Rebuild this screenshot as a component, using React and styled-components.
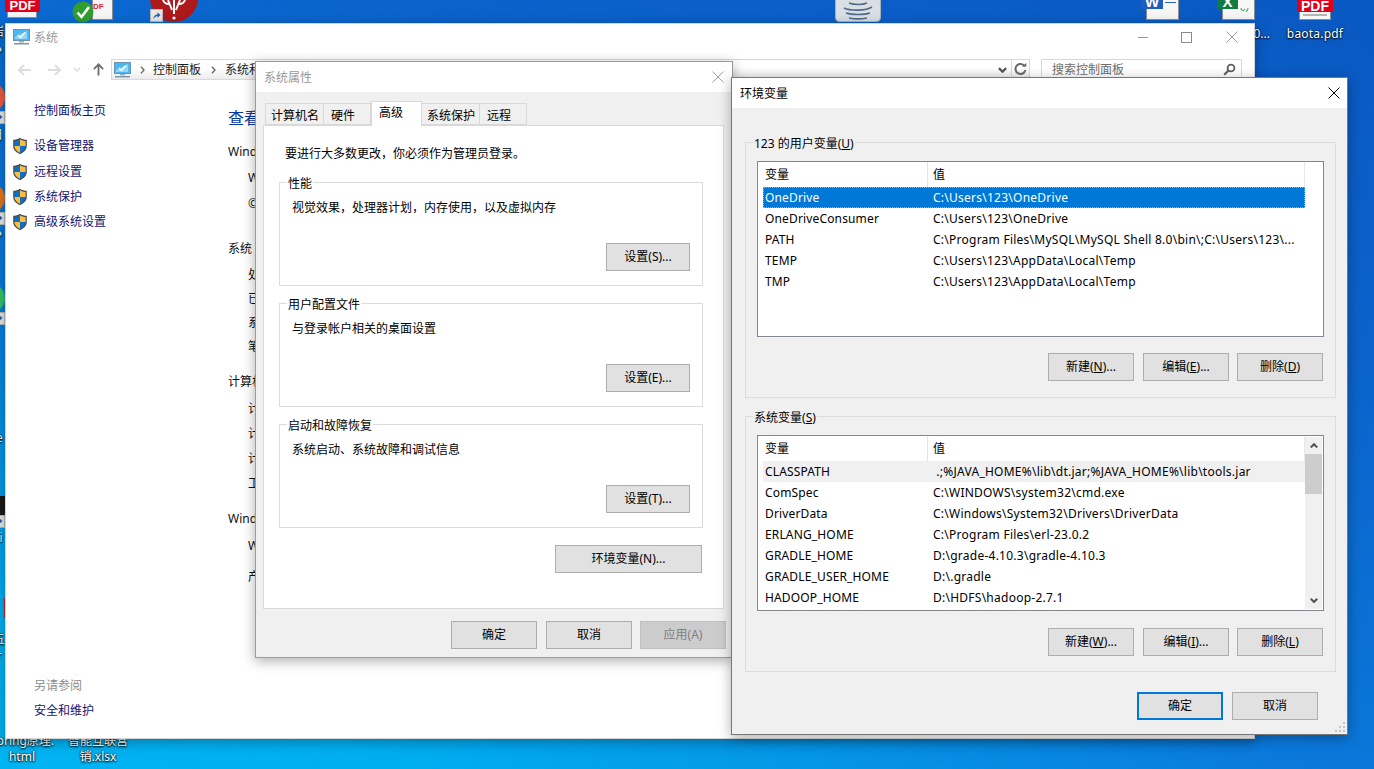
import React from 'react';
import styled, { createGlobalStyle } from 'styled-components';

const Global = createGlobalStyle`
  html, body { margin: 0; padding: 0; width: 1374px; height: 769px; overflow: hidden; }
  * { box-sizing: border-box; }
  body { font: 12px/16px "Noto Sans", "Noto Sans CJK SC", sans-serif; color: #000; }
  u { text-underline-offset: 1px; }
`;

const Desktop = styled.div`
  position: relative;
  width: 1374px;
  height: 769px;
  overflow: hidden;
  background: linear-gradient(200deg, #0a58c2 0%, #0b63cc 30%, #0a78da 62%, #00aef0 88%, #00b4f2 100%);
`;

/* ---------- desktop items ---------- */
const Item = styled.div`
  position: absolute;
  left: ${p => p.$x}px;
  top: ${p => p.$y}px;
  width: ${p => p.$w}px;
  height: ${p => p.$h}px;
  background: ${p => p.$bg || 'transparent'};
`;
const EdgeDisc = styled(Item)`
  border-radius: 50%;
`;
const DocSheet = styled(Item)`
  background: #f6f6f6;
  border: 1px solid #8d8d8d;
  border-top: none;
`;
const BrandBlock = styled(Item)`
  background: ${p => p.$bg};
  color: #fff;
  font: 700 ${p => p.$size || 13}px/${p => p.$lh || p.$h}px "Liberation Sans", sans-serif;
  text-align: center;
  overflow: hidden;
`;
const DocMark = styled(Item)`
  color: #d8262c;
  font: 700 8px/8px "Liberation Sans", sans-serif;
  white-space: nowrap;
`;
const DeskLabel = styled.div`
  position: absolute;
  left: ${p => p.$x}px;
  top: ${p => p.$y}px;
  width: ${p => p.$w}px;
  color: #fff;
  text-align: ${p => p.$align || 'center'};
  white-space: nowrap;
  font-size: 12px;
  line-height: 16px;
  letter-spacing: ${p => p.$track || 0}px;
  text-shadow: 0 1px 2px #000, 0 0 2px #000;
`;
const Shortcut = styled.div`
  position: absolute;
  left: ${p => p.$x}px;
  top: ${p => p.$y}px;
  width: 13px;
  height: 13px;
  background: #e8e8e8;
  border: 1px solid #b9b9b9;
  display: flex;
  align-items: center;
  justify-content: center;
`;

/* ---------- windows ---------- */
const Window = styled.div`
  position: absolute;
  left: ${p => p.$x}px;
  top: ${p => p.$y}px;
  width: ${p => p.$w}px;
  height: ${p => p.$h}px;
  z-index: ${p => p.$z};
  display: flex;
  flex-direction: column;
  background: ${p => p.$bg};
  border: 1px solid ${p => p.$line};
  box-shadow: 0 3px 12px rgba(0, 0, 0, 0.32);
`;
const TitleBar = styled.div`
  flex: none;
  height: ${p => p.$h}px;
  display: flex;
  align-items: center;
  background: #fff;
  padding: ${p => p.$pad};
  color: ${p => p.$color || '#000'};
`;
const TitleText = styled.span`
  margin-left: ${p => p.$gap || 0}px;
  flex: 1;
  padding-top: 2px;
`;
const CaptionBtn = styled.div`
  width: ${p => p.$w}px;
  height: 20px;
  display: flex;
  align-items: center;
  justify-content: center;
`;
const MinBar = styled.span`
  display: block;
  width: 10px;
  height: 1px;
  background: #9a9a9a;
`;

/* ---------- main system window ---------- */
const Toolbar = styled.div`
  flex: none;
  height: 36px;
  padding: 9px 12px 6px 11px;
  display: flex;
  align-items: flex-start;
`;
const NavBtn = styled.div`
  width: ${p => p.$w}px;
  height: 21px;
  margin-left: ${p => p.$left || 0}px;
  display: flex;
  align-items: center;
  justify-content: center;
`;
const AddressBar = styled.div`
  width: 919px;
  height: 21px;
  margin-left: 6px;
  display: flex;
  align-items: center;
  border: 1px solid #d9d9d9;
  background: linear-gradient(#ffffff 40%, #ececec);
  padding-left: 2px;
`;
const Crumb = styled.span`
  margin-left: ${p => p.$l || 0}px;
  margin-right: ${p => p.$r || 0}px;
  white-space: nowrap;
  color: #1a1a1a;
`;
const Spacer = styled.div`
  flex: 1;
`;
const AddrTool = styled.div`
  width: ${p => p.$w}px;
  height: 19px;
  display: flex;
  align-items: center;
  justify-content: center;
  border-left: ${p => (p.$sep ? '1px solid #d9d9d9' : 'none')};
`;
const SearchBox = styled.div`
  width: 201px;
  height: 21px;
  margin-left: 11px;
  display: flex;
  align-items: center;
  justify-content: space-between;
  padding: 0 5px 0 10px;
  border: 1px solid #d9d9d9;
  color: #6d6d6d;
`;
const MainBody = styled.div`
  flex: 1;
  display: flex;
  min-height: 0;
`;
const Sidebar = styled.div`
  width: 222px;
  flex: none;
  display: flex;
  flex-direction: column;
  padding: 17px 0 19px 6px;
`;
const SideLink = styled.div`
  height: 16px;
  display: flex;
  align-items: center;
  gap: 6px;
  color: #14146e;
  padding-left: ${p => (p.$plain ? 22 : 0)}px;
  margin-top: ${p => p.$top || 0}px;
  white-space: nowrap;
`;
const SideHint = styled.div`
  margin-top: auto;
  padding-left: 22px;
  color: #8c8c8c;
  margin-bottom: 9px;
`;
const Content = styled.div`
  flex: 1;
  padding-top: 21px;
`;
const Heading = styled.div`
  color: #0a3a9e;
  font-size: 16px;
  line-height: 22px;
  white-space: nowrap;
`;
const InfoLine = styled.div`
  margin-top: ${p => p.$top}px;
  padding-left: ${p => (p.$sub ? 20 : 0)}px;
  white-space: nowrap;
  color: #101010;
`;

/* ---------- properties dialog ---------- */
const TabStrip = styled.div`
  flex: none;
  height: 24px;
  margin-top: 9px;
  padding-left: 9px;
  display: flex;
  align-items: flex-end;
  position: relative;
  z-index: 1;
`;
const Tab = styled.div`
  width: ${p => p.$w}px;
  height: ${p => (p.$active ? 25 : 22)}px;
  margin-bottom: ${p => (p.$active ? -1 : 0)}px;
  background: ${p => (p.$active ? '#fff' : '#f0f0f0')};
  border: 1px solid #d9d9d9;
  border-left-width: ${p => (p.$first || p.$active ? 1 : 0)}px;
  border-bottom-width: ${p => (p.$active ? 0 : 1)}px;
  padding: ${p => (p.$active ? 3 : 4)}px 0 0 ${p => p.$text}px;
  white-space: nowrap;
`;
const Panel = styled.div`
  flex: none;
  width: 461px;
  height: 484px;
  margin-left: 7px;
  background: #fff;
  border: 1px solid #d9d9d9;
  padding: 20px 20px 0 15px;
`;
const Notice = styled.div`
  padding-left: 6px;
  height: 16px;
`;
const Group = styled.div`
  position: relative;
  width: ${p => p.$w}px;
  height: ${p => p.$h}px;
  margin-top: ${p => p.$top}px;
  border: 1px solid #dcdcdc;
  display: flex;
  flex-direction: column;
  padding: ${p => p.$pad};
`;
const Legend = styled.div`
  position: absolute;
  left: ${p => p.$x}px;
  top: -7px;
  padding: 0 1px;
  height: 16px;
  background: ${p => p.$bg};
  white-space: nowrap;
`;
const GroupText = styled.div`
  height: 16px;
`;
const Row = styled.div`
  display: flex;
  justify-content: flex-end;
  gap: ${p => p.$gap ?? 9}px;
  margin-top: ${p => p.$top || 0}px;
  padding-right: ${p => p.$right || 0}px;
`;
const Btn = styled.div`
  width: ${p => p.$w || 86}px;
  height: 28px;
  flex: none;
  margin-left: ${p => (p.$pull ? -1 : 0)}px;
  display: flex;
  align-items: center;
  justify-content: center;
  white-space: nowrap;
  background: ${p => (p.$off ? '#cccccc' : '#e1e1e1')};
  color: ${p => (p.$off ? '#7f7f7f' : '#000')};
  border: ${p => (p.$primary ? '2px solid #0078d7' : `1px solid ${p.$off ? '#bfbfbf' : '#adadad'}`)};
`;

/* ---------- env dialog ---------- */
const EnvBody = styled.div`
  flex: 1;
  background: #f0f0f0;
  padding: 34px 12px 0 13px;
  position: relative;
`;
const ListBox = styled.div`
  width: 567px;
  height: 176px;
  background: #fff;
  border: 1px solid #828790;
  display: flex;
`;
const ListMain = styled.div`
  flex: 1;
  min-width: 0;
  padding-left: 5px;
`;
const ListHead = styled.div`
  height: 25px;
  width: 542px;
  display: grid;
  grid-template-columns: 164px 1fr;
  border-right: 1px solid #e8e8e8;
`;
const HeadCell = styled.div`
  padding: 5px 0 0 ${p => (p.$val ? 5 : 2)}px;
  border-left: ${p => (p.$val ? '1px solid #e5e5e5' : 'none')};
  height: 25px;
`;
const ListRow = styled.div`
  height: 21px;
  width: 542px;
  display: grid;
  grid-template-columns: 164px 1fr;
  align-items: center;
  line-height: 21px;
  white-space: pre;
  background: ${p => (p.$sel ? '#0078d7' : p.$dim ? '#f0f0f0' : 'transparent')};
  color: ${p => (p.$sel ? '#fff' : '#000')};
  outline: ${p => (p.$sel ? '1px dotted #e8a050' : 'none')};
  outline-offset: -1px;
`;
const Cell = styled.div`
  padding-left: ${p => (p.$val ? 6 : 2)}px;
  overflow: hidden;
  letter-spacing: ${p => (p.$val ? 0.25 : 0.15)}px;
`;
const ScrollBar = styled.div`
  width: 17px;
  flex: none;
  margin: 1px 1px 1px 0;
  background: #f0f0f0;
  display: flex;
  flex-direction: column;
  align-items: stretch;
`;
const ScrollArrow = styled.div`
  flex: none;
  height: 17px;
  display: flex;
  align-items: center;
  justify-content: center;
`;
const ScrollThumb = styled.div`
  flex: none;
  height: 40px;
  background: #cdcdcd;
`;
const Grip = styled.svg`
  position: absolute;
  right: 1px;
  bottom: 1px;
`;

/* ---------- drawings ---------- */
const Monitor = () => (
  <svg width="17" height="16" viewBox="0 0 17 16">
    <rect x="0.5" y="0.5" width="16" height="11" fill="#4cb7f1" stroke="#6f93b3" />
    <path d="M2 8 L14 2 V10 H2Z" fill="#8ed6fa" />
    <path d="M5 6 l2.5 2.5 L12 3.5" fill="none" stroke="#fff" strokeWidth="1.4" />
    <rect x="6" y="12" width="5" height="1.5" fill="#9fb2c2" />
    <rect x="1" y="14" width="15" height="1.5" fill="#7f95a8" />
  </svg>
);
const Shield = () => (
  <svg width="16" height="18" viewBox="0 0 16 18">
    <path d="M8 .8C6 2.2 3.5 2.8 1.2 2.8V9c0 3.8 3.4 6.8 6.8 8.2 3.4-1.4 6.8-4.4 6.8-8.2V2.8C12.5 2.8 10 2.2 8 .8Z" fill="#4b4b4b" />
    <path d="M8 2.2C6.2 3.3 4.2 3.9 2.4 4V9H8Z" fill="#0e6fc6" />
    <path d="M8 2.2C9.8 3.3 11.8 3.9 13.6 4V9H8Z" fill="#fbbd3d" />
    <path d="M2.4 9C2.6 12.2 5.2 14.7 8 15.9V9Z" fill="#fbbd3d" />
    <path d="M13.6 9C13.4 12.2 10.8 14.7 8 15.9V9Z" fill="#0e6fc6" />
  </svg>
);
const XMark = ({ c, s = 12 }) => (
  <svg width={s} height={s} viewBox="0 0 12 12">
    <path d="M.5.5l11 11M11.5.5l-11 11" stroke={c} strokeWidth="1" fill="none" />
  </svg>
);
const ArrowRight = ({ c }) => (
  <svg width="15" height="14" viewBox="0 0 15 14">
    <path d="M1 7h12M8 2l5 5-5 5" fill="none" stroke={c} strokeWidth="2" />
  </svg>
);
const ArrowLeft = ({ c }) => (
  <svg width="15" height="14" viewBox="0 0 15 14">
    <path d="M14 7H2M7 2L2 7l5 5" fill="none" stroke={c} strokeWidth="2" />
  </svg>
);
const UpArrow = () => (
  <svg width="14" height="15" viewBox="0 0 14 15">
    <path d="M7 14V2M2 7l5-5 5 5" fill="none" stroke="#6d6d6d" strokeWidth="2" />
  </svg>
);
const Chev = ({ c = '#666', w = 8, h = 5, sw = 1.6, up }) => (
  <svg width={w} height={h} viewBox="0 0 8 5">
    <path d={up ? 'M.8 4.4L4 1.2l3.2 3.2' : 'M.8.8L4 4l3.2-3.2'} fill="none" stroke={c} strokeWidth={sw} />
  </svg>
);
const Sep = () => (
  <svg width="5" height="8" viewBox="0 0 5 8">
    <path d="M1 .8L4 4 1 7.2" fill="none" stroke="#666" strokeWidth="1.3" />
  </svg>
);
const Refresh = () => (
  <svg width="13" height="13" viewBox="0 0 13 13">
    <path d="M10.8 3.4A5 5 0 1 0 11.4 7" fill="none" stroke="#6b6b6b" strokeWidth="2" />
    <path d="M7.8 3.6h4.6V0Z" fill="#6b6b6b" />
  </svg>
);
const Magnifier = () => (
  <svg width="13" height="13" viewBox="0 0 13 13">
    <circle cx="8" cy="5" r="3.4" fill="none" stroke="#5f5f5f" strokeWidth="1.8" />
    <path d="M5.5 7.5L1.2 11.8" stroke="#5f5f5f" strokeWidth="2.2" />
  </svg>
);
const ShortArrow = () => (
  <svg width="9" height="9" viewBox="0 0 9 9">
    <path d="M1.5 8C1.5 5 3 3.5 5.5 3.5V1.2L8.5 4 5.5 6.8V5C4 5 2.8 6 1.5 8Z" fill="#2a5fa8" />
  </svg>
);

const AccLabel = ({ pre, k, post }) => (
  <span>{pre}(<u>{k}</u>){post}</span>
);

const userVars = [
  ['OneDrive', 'C:\\Users\\123\\OneDrive'],
  ['OneDriveConsumer', 'C:\\Users\\123\\OneDrive'],
  ['PATH', 'C:\\Program Files\\MySQL\\MySQL Shell 8.0\\bin\\;C:\\Users\\123\\...'],
  ['TEMP', 'C:\\Users\\123\\AppData\\Local\\Temp'],
  ['TMP', 'C:\\Users\\123\\AppData\\Local\\Temp'],
];
const sysVars = [
  ['CLASSPATH', ' .;%JAVA_HOME%\\lib\\dt.jar;%JAVA_HOME%\\lib\\tools.jar'],
  ['ComSpec', 'C:\\WINDOWS\\system32\\cmd.exe'],
  ['DriverData', 'C:\\Windows\\System32\\Drivers\\DriverData'],
  ['ERLANG_HOME', 'C:\\Program Files\\erl-23.0.2'],
  ['GRADLE_HOME', 'D:\\grade-4.10.3\\gradle-4.10.3'],
  ['GRADLE_USER_HOME', 'D:\\.gradle'],
  ['HADOOP_HOME', 'D:\\HDFS\\hadoop-2.7.1'],
];

const perfGroups = [
  { title: '性能', text: '视觉效果，处理器计划，内存使用，以及虚拟内存', key: 'S', top: 20 },
  { title: '用户配置文件', text: '与登录帐户相关的桌面设置', key: 'E', top: 17 },
  { title: '启动和故障恢复', text: '系统启动、系统故障和调试信息', key: 'T', top: 17 },
];

const ListHeader = () => (
  <ListHead>
    <HeadCell>变量</HeadCell>
    <HeadCell $val>值</HeadCell>
  </ListHead>
);

export default function App() {
  return (
    <Desktop>
      <Global />

      {/* desktop icons behind the windows */}
      <DocSheet $x={7} $y={0} $w={30} $h={18} />
      <BrandBlock $x={5} $y={0} $w={35} $h={12} $bg="#e0001b">PDF</BrandBlock>

      <DocSheet $x={92} $y={0} $w={21} $h={20} />
      <DocMark $x={93} $y={3} $w={12} $h={8}>DF</DocMark>
      <Item $x={72} $y={1} $w={24} $h={24}>
        <svg width="24" height="24" viewBox="0 0 24 24">
          <circle cx="11" cy="11" r="10.5" fill="#2f9e2f" />
          <path d="M5.5 11.5l4 4.5L17 6" fill="none" stroke="#fff" strokeWidth="2.6" />
        </svg>
      </Item>

      <Item $x={150} $y={-26} $w={48} $h={48}>
        <svg width="48" height="48" viewBox="0 0 48 48">
          <circle cx="24" cy="24" r="24" fill="#ad1a1c" />
          <path d="M24 26v14M18 26l4 10M30 26l-4 10M13 26c1 3 3 4 6 4M35 26c-1 3-3 4-6 4" stroke="#fff" strokeWidth="2" fill="none" />
          <circle cx="24" cy="44" r="1.6" fill="#fff" />
        </svg>
      </Item>
      <Shortcut $x={150} $y={9}><ShortArrow /></Shortcut>

      <Item $x={835} $y={-6} $w={46} $h={28}>
        <svg width="46" height="28" viewBox="0 0 46 28">
          <rect x=".5" y=".5" width="45" height="27" rx="4" fill="#d9dfe4" stroke="#a9b3bb" />
          <path d="M9 14c6 3 22 3 28-1M11 19c6 2 18 2 24 0M14 24c5 1 13 1 18 0M14 9c5 2 14 2 18 0" fill="none" stroke="#4e6b8a" strokeWidth="1.6" />
        </svg>
      </Item>

      <DocSheet $x={1146} $y={0} $w={33} $h={20} />
      <BrandBlock $x={1141} $y={0} $w={22} $h={9} $lh={3} $size={15} $bg="#1f5cbf">W</BrandBlock>
      <Item $x={1165} $y={2} $w={11} $h={1} $bg="#2a62c0" />

      <DocSheet $x={1222} $y={0} $w={33} $h={20} />
      <BrandBlock $x={1217} $y={0} $w={21} $h={9} $lh={3} $size={15} $bg="#107c41">X</BrandBlock>
      <Item $x={1240} $y={0} $w={10} $h={4}>
        <svg width="10" height="4" viewBox="0 0 10 4">
          <path d="M1 0c0 3 3 3 4 1M8 0c0 2-1 3-2 4" fill="none" stroke="#4fb37a" strokeWidth="1.2" />
        </svg>
      </Item>

      <DocSheet $x={1299} $y={0} $w={32} $h={20} />
      <Item $x={1303} $y={14} $w={24} $h={2} $bg="#b5b5b5" />
      <BrandBlock $x={1297} $y={0} $w={36} $h={12} $size={14} $bg="#e0001b">PDF</BrandBlock>

      <DeskLabel $x={1236} $y={26} $w={34} $align="right">0...</DeskLabel>
      <DeskLabel $x={1282} $y={26} $w={66} $track={0.2}>baota.pdf</DeskLabel>

      <DeskLabel $x={-21} $y={733} $w={86}>Spring原理.</DeskLabel>
      <DeskLabel $x={0} $y={749} $w={44}>html</DeskLabel>
      <DeskLabel $x={60} $y={733} $w={76}>智能互联营</DeskLabel>
      <DeskLabel $x={60} $y={749} $w={76}>销.xlsx</DeskLabel>

      {/* icons peeking out at the left edge */}
      <DeskLabel $x={-9} $y={24} $w={14}>岩</DeskLabel>
      <DeskLabel $x={-8} $y={44} $w={13}>P</DeskLabel>
      <EdgeDisc $x={-25} $y={82} $w={30} $h={30} $bg="#ee5a3c" />
      <Shortcut $x={-8} $y={111}><ShortArrow /></Shortcut>
      <EdgeDisc $x={-25} $y={183} $w={30} $h={30} $bg="#e0751f" />
      <Shortcut $x={-8} $y={212}><ShortArrow /></Shortcut>
      <EdgeDisc $x={-25} $y={283} $w={30} $h={30} $bg="#35c06a" />
      <Shortcut $x={-8} $y={312}><ShortArrow /></Shortcut>
      <Item $x={0} $y={496} $w={5} $h={19} $bg="#1a1a1a" />
      <Shortcut $x={-8} $y={515}><ShortArrow /></Shortcut>
      <Item $x={4} $y={598} $w={1} $h={20} $bg="#c0202a" />
      <DeskLabel $x={-11} $y={127} $w={16}>日</DeskLabel>
      <DeskLabel $x={-8} $y={228} $w={13}>P</DeskLabel>
      <DeskLabel $x={-6} $y={430} $w={11}>e</DeskLabel>
      <DeskLabel $x={-8} $y={530} $w={13}>ri</DeskLabel>
      <DeskLabel $x={-7} $y={632} $w={12}>五</DeskLabel>
      <DeskLabel $x={-7} $y={648} $w={12}>r</DeskLabel>

      {/* 系统 */}
      <Window $x={5} $y={23} $w={1250} $h={716} $z={1} $bg="#fff" $line="#d4d4d4">
        <TitleBar $h={26} $pad="0 0 0 7px" $color="#999">
          <Monitor />
          <TitleText $gap={4}>系统</TitleText>
          <CaptionBtn $w={38}><MinBar /></CaptionBtn>
          <CaptionBtn $w={48}>
            <svg width="11" height="11" viewBox="0 0 11 11"><rect x=".5" y=".5" width="10" height="10" fill="none" stroke="#8a8a8a" /></svg>
          </CaptionBtn>
          <CaptionBtn $w={44}><XMark c="#9a9a9a" /></CaptionBtn>
        </TitleBar>
        <Toolbar>
          <NavBtn $w={15}><ArrowLeft c="#dedede" /></NavBtn>
          <NavBtn $w={15} $left={15}><ArrowRight c="#dedede" /></NavBtn>
          <NavBtn $w={30}><Chev c="#dedede" /></NavBtn>
          <NavBtn $w={13}><UpArrow /></NavBtn>
          <AddressBar>
            <Monitor />
            <Crumb $l={9} $r={8}><Sep /></Crumb>
            <Crumb>控制面板</Crumb>
            <Crumb $l={10} $r={9}><Sep /></Crumb>
            <Crumb>系统和安全</Crumb>
            <Spacer />
            <AddrTool $w={17}><Chev c="#555" w={9} h={6} sw={2} /></AddrTool>
            <AddrTool $w={18} $sep><Refresh /></AddrTool>
          </AddressBar>
          <SearchBox>
            <span>搜索控制面板</span>
            <Magnifier />
          </SearchBox>
        </Toolbar>
        <MainBody>
          <Sidebar>
            <SideLink $plain>控制面板主页</SideLink>
            <SideLink $top={19}><Shield />设备管理器</SideLink>
            <SideLink $top={10}><Shield />远程设置</SideLink>
            <SideLink $top={9}><Shield />系统保护</SideLink>
            <SideLink $top={9}><Shield />高级系统设置</SideLink>
            <SideHint>另请参阅</SideHint>
            <SideLink $plain>安全和维护</SideLink>
          </Sidebar>
          <Content>
            <Heading>查看有关计算机的基本信息</Heading>
            <InfoLine $top={15}>Windows 版本</InfoLine>
            <InfoLine $sub $top={10}>Windows 10</InfoLine>
            <InfoLine $sub $top={10}>© 2019</InfoLine>
            <InfoLine $top={29}>系统</InfoLine>
            <InfoLine $sub $top={10}>处理器</InfoLine>
            <InfoLine $sub $top={8}>已安装</InfoLine>
            <InfoLine $sub $top={8}>系统类型</InfoLine>
            <InfoLine $sub $top={8}>笔和触控</InfoLine>
            <InfoLine $top={19}>计算机名</InfoLine>
            <InfoLine $sub $top={11}>计算机名</InfoLine>
            <InfoLine $sub $top={9}>计算机全名</InfoLine>
            <InfoLine $sub $top={9}>计算机描述</InfoLine>
            <InfoLine $sub $top={9}>工作组</InfoLine>
            <InfoLine $top={19}>Windows 激活</InfoLine>
            <InfoLine $sub $top={11}>Windows 已激活</InfoLine>
            <InfoLine $sub $top={15}>产品 ID</InfoLine>
          </Content>
        </MainBody>
      </Window>

      {/* 系统属性 */}
      <Window $x={255} $y={61} $w={478} $h={597} $z={2} $bg="#f0f0f0" $line="#9c9c9c">
        <TitleBar $h={30} $pad="0 8px 0 8px" $color="#999">
          <TitleText>系统属性</TitleText>
          <XMark c="#a0a0a0" />
        </TitleBar>
        <TabStrip>
          <Tab $w={59} $first $text={5}>计算机名</Tab>
          <Tab $w={47} $text={7}>硬件</Tab>
          <Tab $w={51} $active $text={7}>高级</Tab>
          <Tab $w={58} $text={5}>系统保护</Tab>
          <Tab $w={47} $text={7}>远程</Tab>
        </TabStrip>
        <Panel>
          <Notice>要进行大多数更改，你必须作为管理员登录。</Notice>
          {perfGroups.map(g => (
            <Group key={g.key} $w={424} $h={104} $top={g.top} $pad="17px 12px 0 12px">
              <Legend $x={7} $bg="#fff">{g.title}</Legend>
              <GroupText>{g.text}</GroupText>
              <Row $top={27}>
                <Btn $w={84}><span>设置({g.key})...</span></Btn>
              </Row>
            </Group>
          ))}
          <Row $top={17} $gap={0} $right={1}>
            <Btn $w={147}>环境变量(N)...</Btn>
          </Row>
        </Panel>
        <Row $top={12} $gap={9} $right={6}>
          <Btn>确定</Btn>
          <Btn>取消</Btn>
          <Btn $off $pull>应用(A)</Btn>
        </Row>
      </Window>

      {/* 环境变量 */}
      <Window $x={731} $y={77} $w={617} $h={658} $z={3} $bg="#f0f0f0" $line="#777">
        <TitleBar $h={30} $pad="0 7px 0 8px">
          <TitleText>环境变量</TitleText>
          <XMark c="#000" />
        </TitleBar>
        <EnvBody>
          <Group $w={591} $h={256} $top={0} $pad="18px 0 0 11px">
            <Legend $x={7} $bg="#f0f0f0"><AccLabel pre="123 的用户变量" k="U" /></Legend>
            <ListBox>
              <ListMain>
                <ListHeader />
                {userVars.map(([k, v], i) => (
                  <ListRow key={k} $sel={i === 0}><Cell>{k}</Cell><Cell $val>{v}</Cell></ListRow>
                ))}
              </ListMain>
            </ListBox>
            <Row $top={16} $right={12}>
              <Btn><AccLabel pre="新建" k="N" post="..." /></Btn>
              <Btn><AccLabel pre="编辑" k="E" post="..." /></Btn>
              <Btn $pull><AccLabel pre="删除" k="D" /></Btn>
            </Row>
          </Group>
          <Group $w={591} $h={256} $top={18} $pad="18px 0 0 11px">
            <Legend $x={7} $bg="#f0f0f0"><AccLabel pre="系统变量" k="S" /></Legend>
            <ListBox>
              <ListMain>
                <ListHeader />
                {sysVars.map(([k, v], i) => (
                  <ListRow key={k} $dim={i === 0}><Cell>{k}</Cell><Cell $val>{v}</Cell></ListRow>
                ))}
              </ListMain>
              <ScrollBar>
                <ScrollArrow><Chev c="#505050" sw={2} up /></ScrollArrow>
                <ScrollThumb />
                <Spacer />
                <ScrollArrow><Chev c="#505050" sw={2} /></ScrollArrow>
              </ScrollBar>
            </ListBox>
            <Row $top={17} $right={12}>
              <Btn><AccLabel pre="新建" k="W" post="..." /></Btn>
              <Btn><AccLabel pre="编辑" k="I" post="..." /></Btn>
              <Btn $pull><AccLabel pre="删除" k="L" /></Btn>
            </Row>
          </Group>
          <Row $top={20} $gap={9} $right={17}>
            <Btn $primary>确定</Btn>
            <Btn>取消</Btn>
          </Row>
          <Grip width="12" height="12" viewBox="0 0 12 12">
            <path d="M9 1h2v2H9zM5 5h2v2H5zM9 5h2v2H9zM1 9h2v2H1zM5 9h2v2H5zM9 9h2v2H9z" fill="#c4c4c4" />
          </Grip>
        </EnvBody>
      </Window>
    </Desktop>
  );
}
